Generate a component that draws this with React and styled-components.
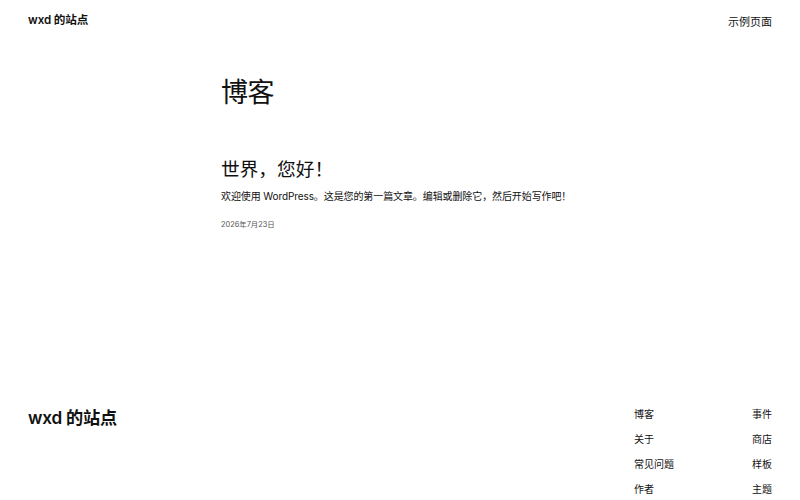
import styled, { createGlobalStyle } from 'styled-components'

const GlobalStyle = createGlobalStyle`
  html, body {
    margin: 0;
    padding: 0;
    background: #ffffff;
  }
  body {
    font-family: Inter, "Noto Sans CJK SC", sans-serif;
    color: #111111;
  }
`

const Page = styled.div`
  width: 800px;
  min-height: 500px;
  display: flex;
  flex-direction: column;
`

const Header = styled.header`
  height: 42px;
  padding: 0 28px;
  display: flex;
  justify-content: space-between;
  align-items: center;
`

const SiteTitle = styled.a`
  font-size: ${({ $large }) => ($large ? '17.2px' : '11.6px')};
  font-weight: 600;
  line-height: 1.2;
  margin-top: ${({ $large }) => ($large ? '2px' : '0')};
  color: #111111;
  text-decoration: none;
  letter-spacing: ${({ $large }) => ($large ? '-0.2px' : '-0.1px')};
`

const HeaderNav = styled.nav`
  font-size: 11px;
  color: #111111;
`

const Main = styled.main`
  width: 358px;
  margin: 0 auto;
  padding: 35px 0 175px;
`

const PageTitle = styled.h1`
  margin: 0;
  font-size: 27px;
  font-weight: 400;
  line-height: 1.2;
  letter-spacing: -0.4px;
`

const Post = styled.article`
  margin-top: 50px;
`

const PostTitle = styled.h2`
  margin: 0;
  font-size: 18.7px;
  font-weight: 400;
  line-height: 1.2;
`

const Excerpt = styled.p`
  margin: 6px 0 0;
  font-size: 10px;
  line-height: 16px;
  white-space: nowrap;
  letter-spacing: -0.1px;
`

const PostDate = styled.time`
  display: block;
  margin-top: 15px;
  font-size: 7.4px;
  line-height: 12px;
  color: #555555;
`

const Footer = styled.footer`
  padding: 0 28px;
  display: flex;
  justify-content: space-between;
  align-items: flex-start;
`

const FooterNav = styled.nav`
  display: grid;
  grid-template-columns: 118px auto;
  row-gap: 9px;
`

const FooterLink = styled.a`
  font-size: 10px;
  line-height: 16px;
  color: #111111;
  text-decoration: none;
`

const links = ['博客', '事件', '关于', '商店', '常见问题', '样板', '作者', '主题']

export default function App() {
  return (
    <Page>
      <GlobalStyle />
      <Header>
        <SiteTitle href="#">wxd 的站点</SiteTitle>
        <HeaderNav>示例页面</HeaderNav>
      </Header>
      <Main>
        <PageTitle>博客</PageTitle>
        <Post>
          <PostTitle>世界，您好！</PostTitle>
          <Excerpt>欢迎使用 WordPress。这是您的第一篇文章。编辑或删除它，然后开始写作吧！</Excerpt>
          <PostDate>2026年7月23日</PostDate>
        </Post>
      </Main>
      <Footer>
        <SiteTitle href="#" $large>wxd 的站点</SiteTitle>
        <FooterNav>
          {links.map((l) => (
            <FooterLink key={l} href="#">{l}</FooterLink>
          ))}
        </FooterNav>
      </Footer>
    </Page>
  )
}
